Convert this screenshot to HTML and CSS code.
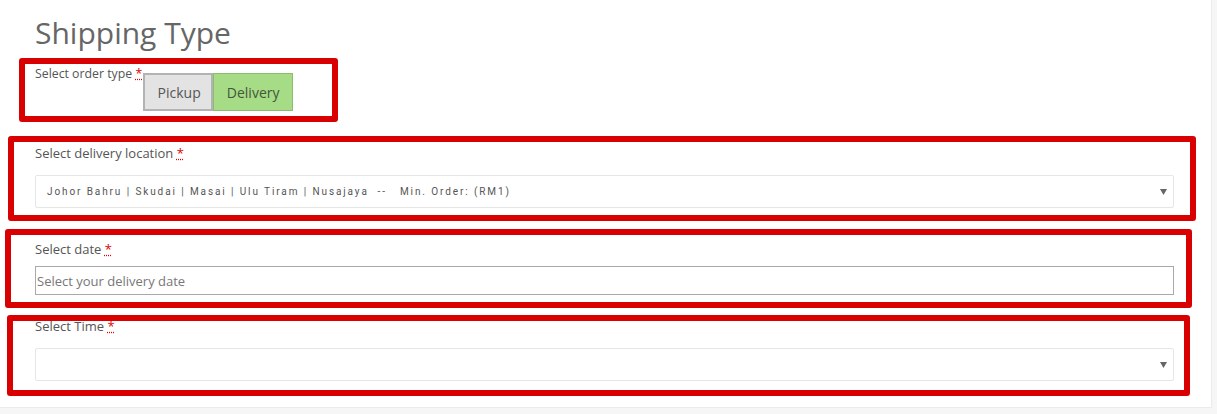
FILE: index.html
```html
<!DOCTYPE html>
<html lang="en">

<head>
  <meta charset="UTF-8" />
  <meta name="viewport" content="width=device-width, initial-scale=1.0" />
  <title>Shipping Type</title>
  <link rel="stylesheet" href="styles.css">
</head>

<body>
  <div class="card">
    <h2 class="title">Shipping Type</h2>

    <div class="field field-type">
      <div class="type-row">
        <label class="label label-small">Select order type <abbr class="req" title="required">*</abbr></label>
        <div class="toggle">
          <button class="toggle-btn pickup" type="button">Pickup</button>
          <button class="toggle-btn delivery" type="button">Delivery</button>
        </div>
      </div>
    </div>

    <div class="field field-location">
      <label class="label">Select delivery location <abbr class="req" title="required">*</abbr></label>
      <div class="select">
        <span class="select-text">Johor Bahru | Skudai | Masai | Ulu Tiram | Nusajaya &nbsp;-- &nbsp; Min. Order: (RM1)</span>
        <svg class="arrow" width="7" height="6" viewBox="0 0 7 6"><path d="M0 0H7L3.5 6Z" fill="#666" /></svg>
      </div>
    </div>

    <div class="field field-date">
      <label class="label">Select date <abbr class="req" title="required">*</abbr></label>
      <input class="date-input" type="text" placeholder="Select your delivery date" />
    </div>

    <div class="field field-time">
      <label class="label">Select Time <abbr class="req" title="required">*</abbr></label>
      <div class="select">
        <span class="select-text"></span>
        <svg class="arrow" width="7" height="6" viewBox="0 0 7 6"><path d="M0 0H7L3.5 6Z" fill="#666" /></svg>
      </div>
    </div>
  </div>
</body>

</html>
```

FILE: styles.css
```css
* {
  box-sizing: border-box;
}

body {
  margin: 0;
  background: #f6f6f6;
  font-family: 'Open Sans', sans-serif;
  color: #555;
}

.card {
  background: #ffffff;
  width: 1212px;
  height: 408px;
  border-right: 1px solid #ebebeb;
  border-bottom: 1px solid #ebebeb;
  padding: 15px 37px 0 35px;
}

.title {
  margin: 0;
  font-size: 30px;
  font-weight: 400;
  line-height: 36px;
  color: #666;
}

.field {
  position: relative;
}

/* red annotation frames */
.field::before {
  content: '';
  position: absolute;
  box-sizing: border-box;
  border: 6px solid #d80000;
  border-radius: 3px;
  pointer-events: none;
}

.field-type {
  margin-top: 15px;
}

.field-type::before {
  left: -16px;
  top: -8px;
  width: 319px;
  height: 64px;
}

.field-location {
  margin-top: 34px;
}

.field-location::before {
  left: -27px;
  top: -9px;
  width: 1188px;
  height: 85px;
}

.field-date {
  margin-top: 33px;
}

.field-date::before {
  left: -30px;
  top: -12px;
  width: 1187px;
  height: 79px;
}

.field-time {
  margin-top: 23px;
}

.field-time::before {
  left: -28px;
  top: -3px;
  width: 1183px;
  height: 81px;
}

.label {
  display: block;
  font-size: 13px;
  line-height: 16px;
  color: #555;
}

.label-small {
  font-size: 12.3px;
}

.req {
  color: #e00000;
  text-decoration: underline dotted #e00000;
}

.type-row {
  display: flex;
  align-items: flex-start;
}

.toggle {
  display: flex;
  margin: 7px 0 0 1px;
}

.toggle-btn {
  font-family: 'Open Sans', sans-serif;
  font-size: 14px;
  height: 38px;
  margin: 0;
  cursor: pointer;
}

.pickup {
  width: 70px;
  background: #e3e3e3;
  border: 2px solid #b3b3b3;
  color: #555;
  padding-left: 8px;
}

.delivery {
  width: 80px;
  background: #a6dc86;
  border: 1px solid #8cbc72;
  color: #44573a;
}

.select {
  display: flex;
  align-items: center;
  justify-content: space-between;
  height: 33px;
  margin-top: 14px;
  padding: 0 6px 0 11px;
  border: 1px solid #e6e6e6;
  border-radius: 2px;
  background: #fff;
}

.select-text {
  font-family: Roboto, sans-serif;
  font-size: 10px;
  letter-spacing: 1.9px;
  color: #555;
  white-space: pre;
}

.arrow {
  flex-shrink: 0;
}

.date-input {
  display: block;
  width: 100%;
  height: 29px;
  margin-top: 9px;
  padding: 0 1px;
  border: 1px solid #a9a9a9;
  font-family: 'Open Sans', sans-serif;
  font-size: 13px;
  color: #555;
  outline: none;
}

.date-input::placeholder {
  color: #777;
}
```
